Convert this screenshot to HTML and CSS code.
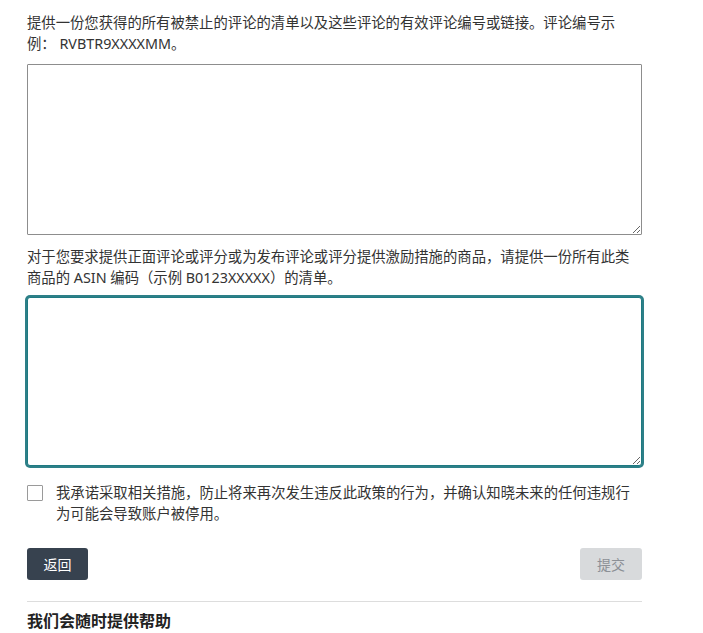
FILE: index.html
```html
<!DOCTYPE html>
<html lang="zh">
<head>
<meta charset="utf-8">
<link rel="stylesheet" href="styles.css">
</head>
<body>
<div class="page">
  <p class="label label-first">提供一份您获得的所有被禁止的评论的清单以及这些评论的有效评论编号或链接。评论编号示例： RVBTR9XXXXMM。</p>
  <textarea class="field field-reviews"></textarea>
  <p class="label label-second">对于您要求提供正面评论或评分或为发布评论或评分提供激励措施的商品，请提供一份所有此类商品的 ASIN 编码（示例 B0123XXXXX）的清单。</p>
  <textarea class="field field-asin"></textarea>
  <label class="consent">
    <span class="box"></span>
    <span class="consent-text">我承诺采取相关措施，防止将来再次发生违反此政策的行为，并确认知晓未来的任何违规行为可能会导致账户被停用。</span>
  </label>
  <div class="actions">
    <button class="btn btn-back">返回</button>
    <button class="btn btn-submit">提交</button>
  </div>
  <div class="divider"></div>
  <h2 class="help">我们会随时提供帮助</h2>
</div>
</body>
</html>
```

FILE: styles.css
```css
html, body {
  margin: 0;
  padding: 0;
  background: #ffffff;
}
body {
  font-family: "Noto Sans", "Noto Sans CJK SC", sans-serif;
  color: #333333;
  font-size: 14.35px;
}
.page {
  width: 615px;
  padding: 12px 0 0 27px;
  display: flex;
  flex-direction: column;
}
.label {
  margin: 0;
  line-height: 21px;
  font-size: 14.35px;
  color: #333333;
}
.field {
  display: block;
  box-sizing: border-box;
  width: 615px;
  margin: 0;
  padding: 6px;
  font-family: inherit;
  font-size: 14px;
  background: #ffffff;
}
.field-reviews {
  margin-top: 10px;
  height: 171px;
  border: 1px solid #8d8d8d;
  border-radius: 1px;
}
.label-second {
  margin-top: 11px;
}
.field-asin {
  margin-top: 9px;
  height: 169px;
  border: 1px solid #1f7a82;
  border-radius: 3px;
  box-shadow: 0 0 0 2px #2d8088;
  outline: none;
}
.consent {
  margin-top: 16px;
  display: flex;
  align-items: flex-start;
  gap: 13px;
}
.box {
  flex: none;
  width: 14px;
  height: 14px;
  margin-top: 3px;
  border: 1px solid #9a9a9a;
  border-radius: 1px;
  background: #ffffff;
}
.consent-text {
  line-height: 21px;
  font-size: 14.35px;
  color: #333333;
}
.actions {
  margin-top: 24px;
  display: flex;
  justify-content: space-between;
}
.btn {
  height: 32px;
  width: 62px;
  border: none;
  border-radius: 3px;
  font-family: inherit;
  font-size: 14px;
  padding: 0;
}
.btn-back {
  background: #37424f;
  color: #ffffff;
  width: 61px;
}
.btn-submit {
  background: #d8dadc;
  color: #8c9096;
}
.divider {
  margin-top: 21px;
  height: 1px;
  background: #dddddd;
}
.help {
  margin: 9px 0 0 0;
  font-size: 16px;
  font-weight: 700;
  line-height: 20px;
  color: #222222;
}
```
